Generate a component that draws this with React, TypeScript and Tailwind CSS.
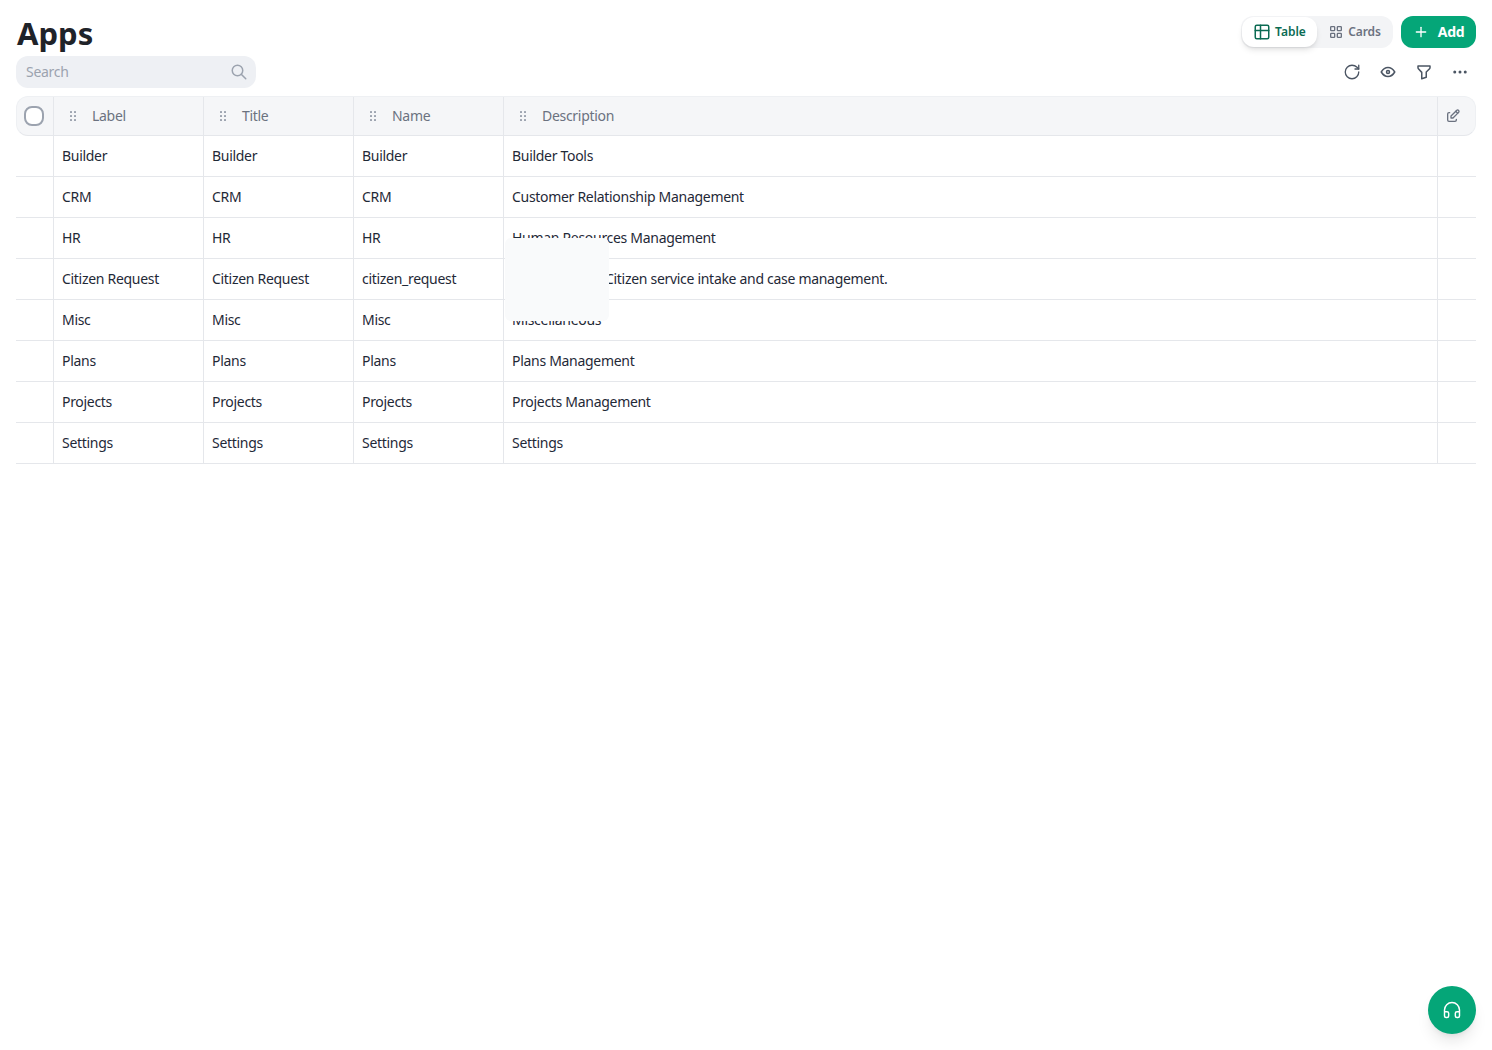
import { Headphones, RotateCw } from "lucide-react";
import { TbEdit, TbEye, TbFilter, TbLayoutGrid, TbPlus, TbSearch, TbTable, TbDots } from "react-icons/tb";

const rows = [
  { label: "Builder", title: "Builder", name: "Builder", description: "Builder Tools" },
  { label: "CRM", title: "CRM", name: "CRM", description: "Customer Relationship Management" },
  { label: "HR", title: "HR", name: "HR", description: "Human Resources Management" },
  { label: "Citizen Request", title: "Citizen Request", name: "citizen_request", description: "Citizen service intake and case management." },
  { label: "Misc", title: "Misc", name: "Misc", description: "Miscellaneous" },
  { label: "Plans", title: "Plans", name: "Plans", description: "Plans Management" },
  { label: "Projects", title: "Projects", name: "Projects", description: "Projects Management" },
  { label: "Settings", title: "Settings", name: "Settings", description: "Settings" },
];

function Grip() {
  return (
    <svg width="8" height="12" viewBox="0 0 8 12" className="shrink-0 fill-[#9ca3af]">
      <rect x="1" y="1" width="2" height="2" rx="0.5" />
      <rect x="5" y="1" width="2" height="2" rx="0.5" />
      <rect x="1" y="5" width="2" height="2" rx="0.5" />
      <rect x="5" y="5" width="2" height="2" rx="0.5" />
      <rect x="1" y="9" width="2" height="2" rx="0.5" />
      <rect x="5" y="9" width="2" height="2" rx="0.5" />
    </svg>
  );
}

function HeaderCell({ text, className }: { text: string; className: string }) {
  return (
    <div className={`flex items-center gap-[15px] border-r border-[#e5e7eb] pl-[15px] ${className}`}>
      <Grip />
      <span>{text}</span>
    </div>
  );
}

export default function App() {
  return (
    <div className="relative min-h-[1050px] bg-white p-4 font-['Noto_Sans',sans-serif] text-sm tracking-[-0.3px] text-[#1f2937]">
      <div className="flex items-start justify-between">
        <div>
          <h1 className="h-10 pl-px text-[31px] leading-[34px] font-bold tracking-normal text-[#1f2329]">Apps</h1>
          <div className="flex h-8 w-60 items-center justify-between rounded-xl bg-[#eef0f4] pr-2 pl-2.5 text-[#9ca3af]">
            <span>Search</span>
            <TbSearch size={18} />
          </div>
        </div>
        <div className="flex flex-col items-end gap-2">
          <div className="flex gap-2">
            <div className="flex h-8 items-center rounded-xl bg-[#f3f4f6] pr-px pl-px text-xs font-semibold tracking-normal">
              <div className="flex h-[30px] w-[75px] items-center justify-center gap-1 rounded-xl bg-white text-[#0b6b53] shadow-md">
                <TbTable size={18} />
                Table
              </div>
              <div className="flex w-[75px] items-center justify-center gap-1 tracking-[-0.1px] text-[#6b7280]">
                <TbLayoutGrid size={16} />
                Cards
              </div>
            </div>
            <div className="flex h-8 w-[75px] items-center justify-center gap-[9px] rounded-xl bg-[#05a678] font-bold text-white">
              <TbPlus size={16} />
              Add
            </div>
          </div>
          <div className="flex h-8 items-center gap-[18px] pr-[7px] text-[#4b5563]">
            <RotateCw size={18} strokeWidth={1.75} />
            <TbEye size={18} />
            <TbFilter size={18} />
            <TbDots size={18} />
          </div>
        </div>
      </div>

      <div className="mt-2 flex h-10 rounded-xl border border-[#eef0f3] border-b-[#e5e7eb] bg-[#f5f6f8] text-[#6b7280]">
        <div className="flex w-[37px] items-center justify-center border-r border-[#e5e7eb] pr-[2px]">
          <div className="size-5 rounded-lg border-2 border-[#9ca3af] bg-white" />
        </div>
        <HeaderCell text="Label" className="w-[150px]" />
        <HeaderCell text="Title" className="w-[150px]" />
        <HeaderCell text="Name" className="w-[150px]" />
        <HeaderCell text="Description" className="flex-1" />
        <div className="flex w-[37px] items-center pl-[7px]">
          <TbEdit size={16} />
        </div>
      </div>

      {rows.map((row) => (
        <div key={row.name} className="flex h-[41px] border-b border-[#e5e7eb]">
          <div className="w-[38px] border-r border-[#e5e7eb]" />
          <div className="flex w-[150px] items-center border-r border-[#e5e7eb] pl-2">{row.label}</div>
          <div className="flex w-[150px] items-center border-r border-[#e5e7eb] pl-2">{row.title}</div>
          <div className="flex w-[150px] items-center border-r border-[#e5e7eb] pl-2">{row.name}</div>
          <div className={`flex flex-1 items-center border-r border-[#e5e7eb] ${row.name === "citizen_request" ? "pl-[101px]" : "pl-2"}`}>
            {row.description}
          </div>
          <div className="w-[38px]" />
        </div>
      ))}

      <div className="absolute top-[238px] left-[505px] h-[83px] w-[104px] rounded-md bg-[#f9fafb]" />

      <div className="absolute top-[986px] left-[1428px] flex size-12 items-center justify-center rounded-full bg-[#05a678] text-white shadow-lg">
        <Headphones size={20} strokeWidth={1.75} />
      </div>
    </div>
  );
}
